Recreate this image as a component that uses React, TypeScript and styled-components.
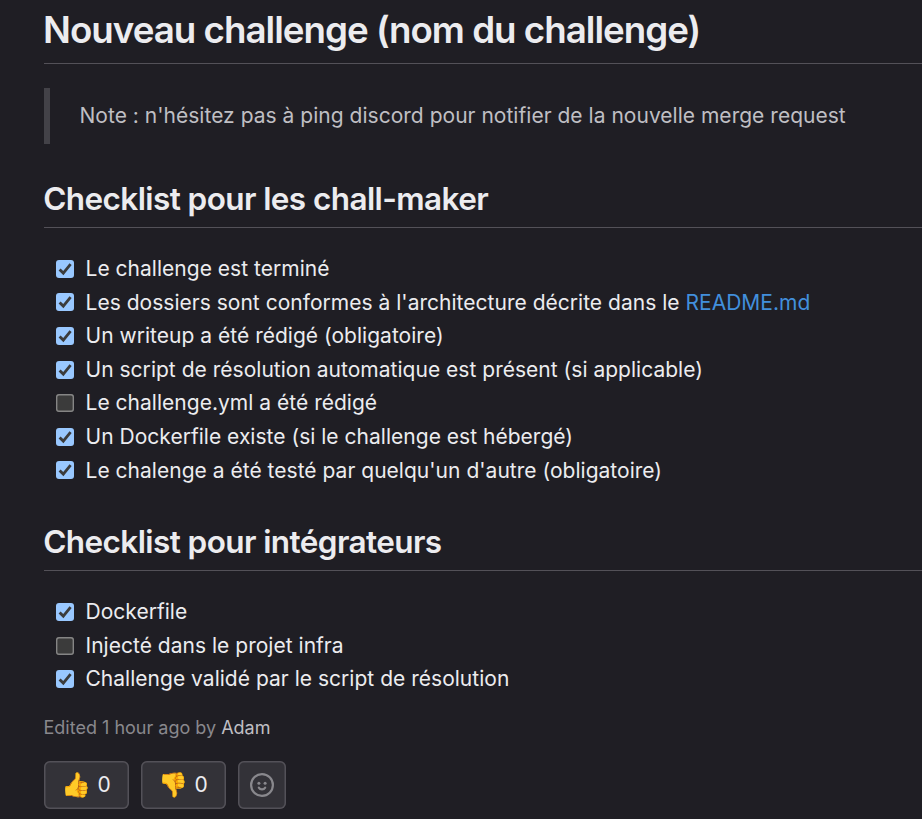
import React from "react";
import styled, { createGlobalStyle } from "styled-components";

const Global = createGlobalStyle`
  *{box-sizing:border-box}
  body{margin:0;background:#1f1e24;color:#ececef;font-family:Inter,"Noto Sans",sans-serif;font-size:21px;letter-spacing:0.02px;overflow:hidden}
`;
const Page = styled.main`width:922px;height:819px;padding-left:44px;display:flex;flex-direction:column;overflow:hidden`;
const Title = styled.h1`margin:0 0 24px;height:64px;border-bottom:1px solid #535158;font-size:36.75px;line-height:59px;font-weight:600;letter-spacing:-1.01px;text-indent:-1px;white-space:nowrap`;
const Note = styled.blockquote`margin:0 0 33px;height:56px;border-left:6px solid #434248;padding-left:29.5px;line-height:55px;color:#bfbfc3;white-space:nowrap`;
const Heading = styled.h2`margin:0 0 23.65px;height:51px;border-bottom:1px solid #535158;font-size:31.5px;line-height:44px;font-weight:600;letter-spacing:-0.59px;text-indent:-0.8px;white-space:nowrap`;
const List = styled.ul`margin:0 0 33.45px;padding:0 0 0 12px;list-style:none`;
const LastList = styled(List)`margin-bottom:20.25px`;
const Item = styled.li`display:flex;align-items:center;height:33.6px;white-space:pre`;
const Box = styled.span<{ $on?: boolean }>`width:18px;height:18px;margin:0.8px 11.5px 0 0;border-radius:3px;flex:none;display:flex;background:${p => p.$on ? "#99c8ff" : "#3b3b3b"};box-shadow:${p => p.$on ? "none" : "inset 0 0 0 1.4px #858585"}`;
const Link = styled.a`color:#428fdc;text-decoration:none`;
const Edited = styled.p`margin:0;font-size:18px;line-height:24px;color:#89888d;letter-spacing:0;text-indent:-0.5px`;
const Name = styled.span`color:#bfbfc3`;
const Awards = styled.div`display:flex;gap:12px;margin-top:21px`;
const Award = styled.button<{ $w: number }>`width:${p => p.$w}px;height:48px;padding:0 0 1px;background:#333238;border:0;box-shadow:inset 0 0 0 1.5px #535158;border-radius:6px;color:#ececef;font:21px Inter,sans-serif;display:flex;align-items:center;justify-content:center;gap:7px`;
const Emoji = styled.span`font-size:24px;line-height:28px;width:28px;margin-top:2px;display:flex;justify-content:center`;
const Face = styled.svg`display:block;margin-top:1px`;

const Check = ({ on, children }: { on?: boolean; children: React.ReactNode }) => (
  <Item><Box $on={on}>{on && <svg width="18" height="18"><path d="M3.6 9.4 7.3 13.1 14.6 4.2" fill="none" stroke="#3b3b3b" strokeWidth="2.8" /></svg>}</Box><span>{children}</span></Item>
);

const Smiley = () => (
  <Face width="24" height="24" viewBox="0 0 24 24" fill="none" stroke="#89888d">
    <circle cx="12" cy="12" r="10.9" strokeWidth="2.2" />
    <path d="M8.8 14.6c1.4 2.4 5 2.4 6.4 0" strokeWidth="2.1" strokeLinecap="round" />
    <circle cx="8.9" cy="10.3" r="1.5" fill="#89888d" stroke="none" />
    <circle cx="15.1" cy="10.3" r="1.5" fill="#89888d" stroke="none" />
  </Face>
);

export default function App() {
  return <><Global /><Page>
    <Title>Nouveau challenge (nom du challenge)</Title>
    <Note>Note : n'hésitez pas à ping discord pour notifier de la nouvelle merge request</Note>
    <Heading>Checklist pour les chall-maker</Heading>
    <List>
      <Check on>Le challenge est terminé</Check>
      <Check on>Les dossiers sont conformes à l'architecture décrite dans le <Link>README.md</Link></Check>
      <Check on>Un writeup a été rédigé (obligatoire)</Check>
      <Check on>Un script de résolution automatique est présent (si applicable)</Check>
      <Check>Le challenge.yml a été rédigé</Check>
      <Check on>Un Dockerfile existe (si le challenge est hébergé)</Check>
      <Check on>Le chalenge a été testé par quelqu'un d'autre (obligatoire)</Check>
    </List>
    <Heading>Checklist pour intégrateurs</Heading>
    <LastList>
      <Check on>Dockerfile</Check>
      <Check>Injecté dans le projet infra</Check>
      <Check on>Challenge validé par le script de résolution</Check>
    </LastList>
    <Edited>Edited 1 hour ago by <Name>Adam</Name></Edited>
    <Awards>
      <Award $w={85}><Emoji>👍</Emoji>0</Award>
      <Award $w={85}><Emoji>👎</Emoji>0</Award>
      <Award $w={48}><Smiley /></Award>
    </Awards>
  </Page></>;
}
